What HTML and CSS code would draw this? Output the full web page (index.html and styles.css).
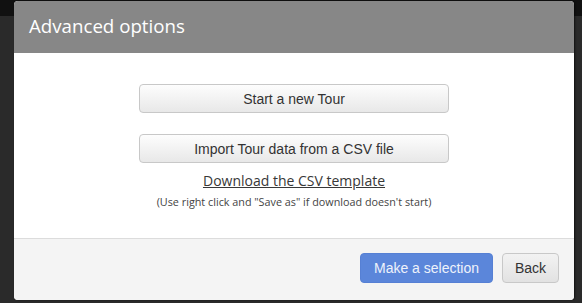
FILE: index.html
```html
<!DOCTYPE html>
<html>
<head>
<meta charset="utf-8">
<link rel="stylesheet" href="styles.css">
</head>
<body>
<div class="topbar"></div>
<div class="modal">
  <div class="modal-header">Advanced options</div>
  <div class="modal-body">
    <button class="btn btn-wide">Start a new Tour</button>
    <button class="btn btn-wide btn-second">Import Tour data from a CSV file</button>
    <a class="dl-link" href="#">Download the CSV template</a>
    <div class="hint">(Use right click and "Save as" if download doesn't start)</div>
  </div>
  <div class="modal-footer">
    <button class="btn btn-primary">Make a selection</button>
    <button class="btn btn-back">Back</button>
  </div>
</div>
</body>
</html>
```
FILE: styles.css
```css
html, body {
  margin: 0;
  padding: 0;
}
body {
  width: 582px;
  height: 303px;
  background: #2a2a2a;
  overflow: hidden;
  position: relative;
  font-family: "Open Sans", "Liberation Sans", sans-serif;
}
.topbar {
  height: 16px;
  background: #111111;
}
.modal {
  position: absolute;
  left: 14px;
  top: 1px;
  width: 560px;
  height: 299px;
  border-radius: 4px;
  overflow: hidden;
  background: #fff;
  display: flex;
  flex-direction: column;
  box-shadow: 1px 0 2px rgba(0,0,0,0.6);
}
.modal-header {
  height: 52px;
  background: #878787;
  color: #fff;
  font-size: 18.7px;
  line-height: 49px;
  padding-left: 15px;
  box-sizing: border-box;
}
.modal-body {
  height: 185px;
  display: flex;
  flex-direction: column;
  align-items: center;
  padding-top: 31px;
  box-sizing: border-box;
}
.btn {
  font-family: "Liberation Sans", Arial, sans-serif;
  font-size: 14px;
  color: #333;
  border: 1px solid #c8c8c8;
  border-radius: 4px;
  background: linear-gradient(#fdfdfd, #e8e8e8);
  padding: 0;
  cursor: pointer;
}
.btn-wide {
  width: 310px;
  height: 29px;
}
.btn-second {
  margin-top: 21px;
}
.dl-link {
  margin-top: 8px;
  font-size: 14px;
  font-weight: 400;
  color: #383838;
  text-decoration: underline;
  line-height: 20px;
}
.hint {
  margin-top: 3px;
  font-size: 10.8px;
  color: #444;
  line-height: 16px;
}
.modal-footer {
  flex: 1;
  background: #f4f4f4;
  border-top: 1px solid #dcdcdc;
  display: flex;
  justify-content: flex-end;
  align-items: flex-start;
  gap: 9px;
  padding: 14px 15px 0 0;
}
.btn-primary {
  width: 133px;
  height: 30px;
  background: #5b86da;
  border: 1px solid #5680d4;
  color: #eef2fb;
}
.btn-back {
  width: 57px;
  height: 30px;
  background: linear-gradient(#f2f2f2, #e2e2e2);
}
```
